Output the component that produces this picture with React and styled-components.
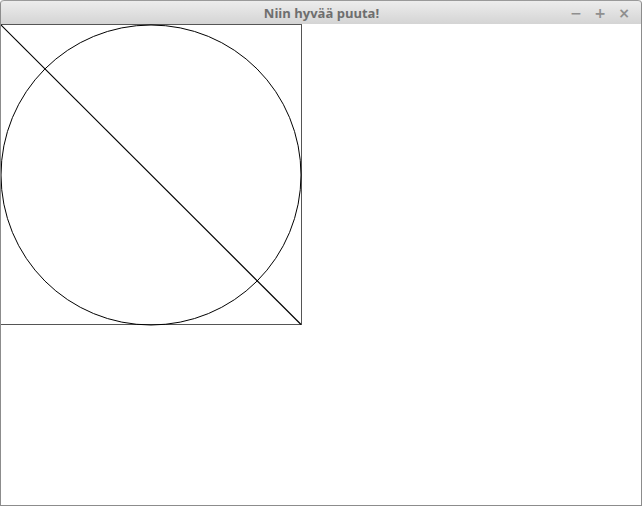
import React from "react";
import styled, { createGlobalStyle } from "styled-components";

const Global = createGlobalStyle`
  html, body { margin: 0; padding: 0; background: #ffffff; }
  body { font-family: "Open Sans", "DejaVu Sans", sans-serif; }
`;

const Window = styled.div`
  width: 642px;
  height: 506px;
  box-sizing: border-box;
  display: flex;
  flex-direction: column;
  border: 1px solid #8c8c8c;
  border-top: none;
  border-radius: 4px 4px 0 0;
  overflow: hidden;
  background: #ffffff;
`;

const TitleBar = styled.div`
  height: 24px;
  flex: 0 0 24px;
  box-sizing: border-box;
  margin: 0 -1px;
  border: 1px solid #9a9a9a;
  border-bottom: none;
  border-radius: 4px 4px 0 0;
  background: linear-gradient(#ededed, #d4d4d4);
  display: grid;
  grid-template-columns: 1fr auto 1fr;
  align-items: center;
`;

const Title = styled.div`
  grid-column: 2;
  font-family: "Open Sans", sans-serif;
  font-weight: 700;
  font-size: 13px;
  color: #6e6e6e;
  line-height: 22px;
  padding-left: 1px;
`;

const Controls = styled.div`
  grid-column: 3;
  justify-self: end;
  display: flex;
  gap: 8px;
  padding-right: 9px;
  align-items: center;
`;

const ControlButton = styled.span`
  width: 16px;
  text-align: center;
  font-family: "DejaVu Sans", sans-serif;
  font-weight: 700;
  font-size: 14px;
  line-height: 22px;
  color: #8f8f8f;
`;

const Canvas = styled.div`
  flex: 1;
  margin-left: -1px;
`;

const Drawing = styled.svg`
  display: block;
  overflow: visible;
`;

export default function App() {
  return (
    <>
      <Global />
      <Window>
        <TitleBar>
          <Title>Niin hyvää puuta!</Title>
          <Controls>
            <ControlButton>−</ControlButton>
            <ControlButton>+</ControlButton>
            <ControlButton>×</ControlButton>
          </Controls>
        </TitleBar>
        <Canvas>
          <Drawing width="302" height="302" viewBox="0 0 302 302">
            <rect x="0.5" y="0.5" width="301" height="300" fill="none" stroke="#555" strokeWidth="1" />
            <circle cx="151" cy="151" r="150" fill="none" stroke="#000" strokeWidth="1" />
            <line x1="0.5" y1="0.5" x2="301" y2="300.5" stroke="#000" strokeWidth="1.2" />
          </Drawing>
        </Canvas>
      </Window>
    </>
  );
}
